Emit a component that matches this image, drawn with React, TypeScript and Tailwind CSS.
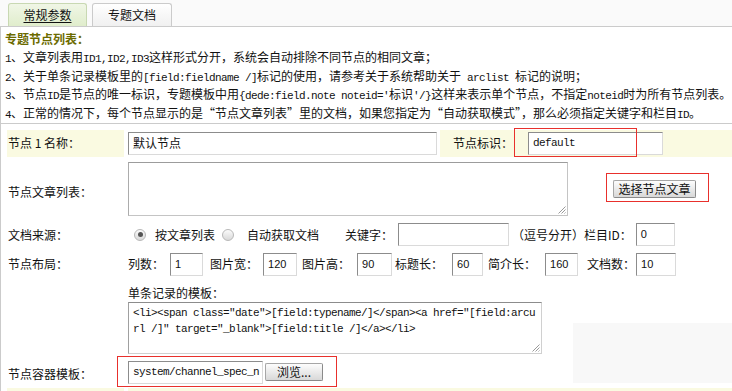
import type { ReactNode } from "react";

const mono = "font-['Liberation_Mono',monospace] text-[11px] tracking-[-0.6px]";

const M = ({ children }: { children: ReactNode }) => <span className={`${mono} leading-none`}>{children}</span>;

const Radio = ({ checked, className = "" }: { checked?: boolean; className?: string }) => (
  <span
    className={`flex h-[12px] w-[12px] shrink-0 items-center justify-center rounded-full border border-[#b8b8b8] bg-linear-to-b from-[#fbfbfb] to-[#d9d9d9] ${className}`}
  >
    {checked && <span className="h-[5px] w-[5px] rounded-full bg-[#555]" />}
  </span>
);

// inset text box, like an old-style <input>
const Box = ({ w, className = "", children }: { w: string; className?: string; children?: ReactNode }) => (
  <div
    className={`flex h-[23px] shrink-0 items-center overflow-hidden whitespace-nowrap border border-t-[#8c8c8c] border-l-[#8c8c8c] border-r-[#dadada] border-b-[#dadada] bg-white pl-[4px] ${w} ${className}`}
  >
    {children}
  </div>
);

const Num = ({ w, v, className = "" }: { w: string; v: string; className?: string }) => (
  <Box w={w} className={className}>
    <span className="font-['Liberation_Sans',sans-serif] text-[11px]">{v}</span>
  </Box>
);

const Grip = () => (
  <svg width="9" height="9" className="absolute right-[1px] bottom-[1px]">
    <path d="M8.5 1.5L1.5 8.5M8.5 4.5L4.5 8.5M8.5 7.5L7.5 8.5" stroke="#9a9a9a" strokeWidth="1" />
  </svg>
);

const Btn = ({ w, children, className = "" }: { w: string; children: ReactNode; className?: string }) => (
  <div
    className={`flex h-[18px] shrink-0 items-center justify-center rounded-[2px] border border-[#a6a6a6] border-b-[#8a8a8a] border-r-[#8a8a8a] bg-linear-to-b from-[#fdfdfd] to-[#d8d8d8] text-[12px] ${w} ${className}`}
  >
    {children}
  </div>
);

const Line = ({ children }: { children: ReactNode }) => (
  <div className="h-[18.67px] leading-[18.67px]">{children}</div>
);

export default function App() {
  return (
    <div className="relative h-[391px] w-[732px] overflow-hidden bg-white font-['Noto_Sans_CJK_SC',sans-serif] text-[12px] text-[#111]">
      {/* tabs */}
      <div className="flex h-[27px] items-end gap-[5px] border-b border-[#cbcbcb] bg-[#fafafa] pl-[8px]">
        <div className="flex h-[23px] w-[79px] items-center justify-center rounded-t-[3px] border border-b-0 border-[#c8d8b2] bg-linear-to-b from-[#f0f6e6] to-[#e0edcc]">
          <span className="underline underline-offset-2">常规参数</span>
        </div>
        <div className="flex h-[23px] w-[80px] items-center justify-center rounded-t-[3px] border border-b-0 border-[#cbcbcb] bg-linear-to-b from-[#ffffff] to-[#f0f0f0]">
          专题文档
        </div>
      </div>

      <div className="border-l border-[#cbcbcb]">
        {/* notes */}
        <div className="border-b border-[#cbcbcb] pt-[3px] pl-[4px] whitespace-nowrap">
          <div className="h-[18px] text-[12px] leading-[18px] font-bold text-[#6b6b00]">专题节点列表：</div>
          <Line>
            <M>1</M>、文章列表用<M>ID1,ID2,ID3</M>这样形式分开，系统会自动排除不同节点的相同文章；
          </Line>
          <Line>
            <M>2</M>、关于单条记录模板里的<M>[field:fieldname /]</M>标记的使用，请参考关于系统帮助关于<M> arclist </M>标记的说明；
          </Line>
          <Line>
            <M>3</M>、节点<M>ID</M>是节点的唯一标识，专题模板中用<M>{"{dede:field.note noteid='"}</M>标识<M>{"'/}"}</M>这样来表示单个节点，不指定<M>noteid</M>时为所有节点列表。
          </Line>
          <Line>
            <M>4</M>、正常的情况下，每个节点显示的是“节点文章列表”里的文档，如果您指定为“自动获取模式”，那么必须指定关键字和栏目<M>ID</M>。
          </Line>
        </div>

        {/* form rows */}
        <div className="pt-[6px] pl-[6px]">
          <div className="flex h-[27px]">
            <div className="flex w-[117px] items-center bg-[#fafae1] pl-[1px]">节点 1 名称：</div>
            <div className="flex w-[316px] items-center bg-white pl-[4px]">
              <Box w="w-[309px]">默认节点</Box>
            </div>
            <div className="flex flex-1 items-center bg-[#fafae1] pl-[13px]">
              节点标识：
              <Box w="w-[135px]" className="ml-[15px]">
                <span className={mono}>default</span>
              </Box>
            </div>
          </div>

          <div className="mt-[3px] flex h-[58px] items-center">
            <div className="mt-[6px] w-[121px] pl-[1px]">节点文章列表：</div>
            <div className="relative h-[54px] w-[440px] border border-[#c4c4c4] border-t-[#9c9c9c] border-l-[#acacac]">
              <Grip />
            </div>
            <Btn w="w-[83px]" className="ml-[45px]">选择节点文章</Btn>
          </div>

          <div className="mt-[4px] flex h-[26px] items-center whitespace-nowrap">
            <div className="w-[121px] pl-[1px]">文档来源：</div>
            <Radio checked className="ml-[6px]" />
            <span className="ml-[9px]">按文章列表</span>
            <Radio className="ml-[7px]" />
            <span className="ml-[13px]">自动获取文档</span>
            <span className="ml-[26px]">关键字：</span>
            <Box w="w-[111px]" className="ml-[5px]" />
            <span className="ml-[3px]">（逗号分开）栏目ID：</span>
            <Num w="w-[39px]" v="0" className="ml-[4px]" />
          </div>

          <div className="mt-[4px] flex h-[25px] items-center whitespace-nowrap">
            <div className="w-[121px] pl-[1px]">节点布局：</div>
            <span>列数：</span>
            <Num w="w-[33px]" v="1" className="ml-[6px]" />
            <span className="ml-[7px]">图片宽：</span>
            <Num w="w-[34px]" v="120" className="ml-[5px]" />
            <span className="ml-[5px]">图片高：</span>
            <Num w="w-[35px]" v="90" className="ml-[7px]" />
            <span className="ml-[3px]">标题长：</span>
            <Num w="w-[31px]" v="60" className="ml-[9px]" />
            <span className="ml-[5px]">简介长：</span>
            <Num w="w-[33px]" v="160" className="ml-[9px]" />
            <span className="ml-[9px]">文档数：</span>
            <Num w="w-[40px]" v="10" className="ml-[1px]" />
          </div>

          <div className="mt-[7px] h-[18px] pl-[121px] leading-[18px]">单条记录的模板：</div>
          <div className="relative ml-[121px] h-[52px] w-[414px] border border-[#d0d0d0] border-t-[#8c8c8c] border-l-[#a0a0a0] pt-[2px] pl-[4px]">
            <div className={`${mono} h-[16px] leading-[16px] whitespace-pre`}>
              {'<li><span class="date">[field:typename/]</span><a href="[field:arcu'}
            </div>
            <div className={`${mono} h-[16px] leading-[16px] whitespace-pre`}>
              {'rl /]" target="_blank">[field:title /]</a></li>'}
            </div>
            <Grip />
          </div>

          <div className="mt-[3px] flex h-[31px] items-center">
            <div className="mt-[4px] w-[121px] pl-[1px]">节点容器模板：</div>
            <Box w="w-[135px]">
              <span className={mono}>system/channel_spec_n</span>
            </Box>
            <Btn w="w-[58px]" className="ml-[2px]">浏览...</Btn>
          </div>

          <div className="flex h-[30px]">
            <div className="w-[117px] bg-[#fafae1]" />
            <div className="w-[4px] bg-white" />
            <div className="flex-1 bg-[#fafae1]" />
          </div>
        </div>
      </div>

      {/* faint panel on the right */}
      <div className="absolute top-[323px] left-[573px] h-[60px] w-[159px] bg-[#f8f8f8]" />

      {/* red annotation boxes */}
      <div className="pointer-events-none absolute top-[128px] left-[514px] h-[29px] w-[123px] border border-[#e8302c]" />
      <div className="pointer-events-none absolute top-[173px] left-[606px] h-[29px] w-[103px] border border-[#e8302c]" />
      <div className="pointer-events-none absolute top-[356px] left-[117px] h-[31px] w-[220px] border border-[#e8302c]" />
    </div>
  );
}
